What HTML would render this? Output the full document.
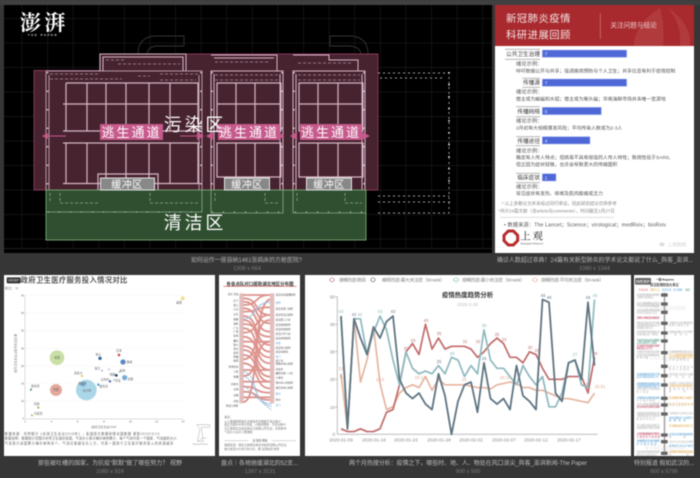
<!DOCTYPE html>
<html><head><meta charset="utf-8">
<style>
html,body{margin:0;padding:0;width:700px;height:478px;overflow:hidden;background:#363636}
svg{display:block;filter:blur(.45px);font-family:"Liberation Sans","Noto Sans CJK SC",sans-serif}
.ln{fill:none;stroke-linejoin:round;vector-effect:non-scaling-stroke}
</style></head><body>
<svg width="700" height="478" viewBox="0 0 700 478" xmlns="http://www.w3.org/2000/svg">
<defs>
<pattern id="g" patternUnits="userSpaceOnUse" x="21.7" y="18.3" width="25.6" height="24.5"><path d="M0 0V24.5M0 0H25.6" stroke="#262626" stroke-width=".9" fill="none"/></pattern>
<clipPath id="c1"><rect x="4" y="5" width="488" height="248"/></clipPath>
<clipPath id="cc"><rect x="305" y="275" width="326" height="181"/></clipPath>
</defs>
<rect width="700" height="478" fill="#363636"/>
<rect width="700" height="5" fill="#404040"/>

<!-- Card 1 -->
<g clip-path="url(#c1)">
<rect x="4" y="5" width="488" height="248" fill="#000"/>
<rect x="4" y="5" width="488" height="243" fill="url(#g)"/>
<path d="M4 248.5H492" stroke="#2a2a2a" stroke-width=".8"/>
<path d="M138 54C138 42 145 36 156 36H184V46H158Q148 46 147 54M330 36H352Q368 38 368 54M330 36V46H350Q360 47 361 54" fill="none" stroke="#333" stroke-width=".9"/>
<path d="M34 70.5H100V54H378V190H34Z" fill="#47222f" stroke="#8a3a5c" stroke-width=".9"/>
<g fill="none" stroke="#d6b8c6" stroke-width="1.200">
 <path d="M46 71H202V190M46 71V190M49 75V190M199 75V190" stroke-width="1" stroke="#b598a6"/>
 <path d="M100 71V54H186V71M103 71V57H183V71" stroke-width="1"/>
 <path d="M66 83H198V131H63M63 104H198M66 83V131M87 83V131M106 83V131M126 83V131M149 83V131M170 83V131M198 83V131"/>
 <path d="M63 143H200M66 143V183M87 143V183M106 143V183M126 143V183M149 143V183M170 143V183M198 143V183M63 183.500H200"/>
 <path d="M98 190V174H158V190"/>
 <path d="M211 55H277V71H211V190M214 58H274M211 71H283V190M214 74V190M280 74V190" stroke-width="1"/>
 <path d="M217 83H281V131H217ZM217 104H281M236 83V131M255 83V131M217 143H281V177H217ZM236 143V177M255 143V177"/>
 <path d="M293 55H329V60H358V71H293V190M296 74V190M293 71H365V190M362 74V190" stroke-width="1"/>
 <path d="M299 83H363V131H299ZM299 104H363M318 83V131M338 83V131M299 143H363V177H299ZM318 143V177M338 143V177"/>
</g>
<g fill="none" stroke="#a8939e" stroke-width=".8" stroke-dasharray="3 2">
 <path d="M50 74H98M50 79H122M138 76H150M160 74H200M160 80H196M215 75H280M215 80H278M298 75H360M298 80H360M106 60H125M118 64H180M215 62H270M298 63H352"/>
</g>
<g stroke="#d6c8cf" stroke-width="1.600" stroke-dasharray="1.500 17" fill="none"><path d="M47.500 72V190M201 72V190M212 72V190M282 72V190M294 72V190M364 72V190"/></g>
<g stroke="#d9d9d9" stroke-width=".7" stroke-dasharray="2 3" fill="none"><path d="M378 73H449V213H378M380 78H445M378 196H449M378 202H450"/></g>
<g stroke="#eee" stroke-width="1.500" stroke-dasharray="1.500 10.500" fill="none"><path d="M449 72V190"/></g>
<rect x="46" y="190" width="320" height="50" fill="#2f4f30" stroke="#76a978" stroke-width=".9"/>
<g fill="none" stroke="#8aaa8c" stroke-width=".8"><path d="M46 212H202V190M211 190V213H283V190M293 190V213H366"/><path d="M50 193V203M60 193V203H100M150 193V203H200M215 193V203M265 193V203H280M297 193V203M345 193V203H362" stroke-dasharray="3 2"/></g>
<g stroke="#c7d4c7" stroke-width="1" stroke-dasharray="1 10" fill="none"><path d="M48 212H200M212 212H282M295 212H365"/></g>
<g fill="#888" stroke="#e6e6e6" stroke-width="1"><rect x="100.500" y="178" width="54" height="12"/><rect x="224.500" y="178" width="45" height="12"/><rect x="306.500" y="178" width="45" height="12"/></g>
<g fill="#fff" font-size="10" text-anchor="middle"><text x="127" y="188" letter-spacing=".5">缓冲区</text><text x="247" y="188" letter-spacing=".5">缓冲区</text><text x="329" y="188" letter-spacing=".5">缓冲区</text></g>
<g fill="#c65a8c"><rect x="100" y="124" width="63" height="16"/><rect x="218" y="124" width="62" height="16"/><rect x="300" y="124" width="62" height="16"/>
<path d="M42 136L48 133V135.500H66V136.500H48V139ZM204 136L197 132V135.500H180V136.500H197V140ZM206 136L213 132V140ZM284 136L279 132V140ZM290 136L297 132V140ZM370 136L362 132V140Z"/></g>
<g fill="#fff" font-size="13" text-anchor="middle"><text x="131.500" y="137" letter-spacing="2">逃生通道</text><text x="249" y="137" letter-spacing="2">逃生通道</text><text x="331" y="137" letter-spacing="2">逃生通道</text></g>
<g fill="#fff" font-size="18" text-anchor="middle"><text x="195" y="131" letter-spacing="2.800">污染区</text><text x="195" y="229" letter-spacing="2.800">清洁区</text></g>
<text x="20" y="30" fill="#fff" font-size="21" font-weight="700" style="font-family:'Noto Serif CJK SC',serif" letter-spacing="3.500">澎湃</text>
<text x="43" y="36" fill="#ddd" font-size="3" font-weight="700" text-anchor="middle" letter-spacing="1.500">THE PAPER</text>
</g>
<text x="191" y="262" fill="#b0b0b0" font-size="6" textLength="111">如何运作一座容纳1461张病床的方舱医院?</text>
<text x="247" y="270" fill="#7d7d7d" font-size="5.600" text-anchor="middle">1308 x 664</text>

<!-- Card 2 -->
<rect x="495" y="5" width="199" height="248" fill="#fff"/>
<rect x="495" y="5" width="199" height="41" fill="#a92a2e"/>
<path d="M634 46Q634 24 660 8Q665 26 663 46ZM668 8Q682 24 680 46H690Q692 24 668 8Z" fill="#b13a3d"/>
<g transform="translate(490,0) scale(.33333)" font-size="16" fill="#555">
<text x="48" y="66" font-size="31" fill="#f2e3e3" letter-spacing="1.500">新冠肺炎疫情</text>
<text x="48" y="115" font-size="31" fill="#f2e3e3" letter-spacing="1.500">科研进展回顾</text>
<rect x="330" y="40" width="2" height="76" fill="#c98083"/>
<text x="361" y="83" font-size="20" fill="#e8c9c9">关注问题与结论</text>
<g fill="#4f68d8" stroke="#a8b5ec" stroke-width="1.500"><rect x="157" y="150" width="253" height="22"/><rect x="157" y="237" width="253" height="22"/><rect x="157" y="322" width="177" height="22"/><rect x="157" y="410" width="143" height="22"/><rect x="157" y="521" width="41" height="22"/></g>
<g fill="#dfe4fa" font-size="15"><text x="164" y="167">7</text><text x="164" y="254">7</text><text x="164" y="339">5</text><text x="164" y="427">4</text><text x="164" y="538">1</text></g>
<g stroke="#aaa" stroke-width="2.500"><path d="M45 148H150M45 178H150M97 235H150M97 262H150M78 320H150M78 350H150M78 410H150M78 437H150M78 520H150M78 548H150"/></g>
<g fill="#333" font-size="17" text-anchor="end"><text x="150" y="168">公共卫生治理</text><text x="150" y="254">传播源</text><text x="150" y="341">传播网络</text><text x="150" y="429">传播途径</text><text x="150" y="538">临床症状</text></g>
<text x="78" y="197">绪论示例：</text><text x="78" y="217" font-size="14.500">呼吁数据公开与共享；强调疾病预防与个人卫生；共享信息有利于疫情控制</text>
<text x="78" y="280">绪论示例：</text><text x="78" y="302" font-size="14.500">宿主或为蝙蝠和水貂；宿主或为菊头蝠；华南海鲜市场并未唯一宣源地</text>
<text x="78" y="367">绪论示例：</text><text x="78" y="388" font-size="14.500">2月初有大规模爆发风险；平均传染人数或为2-3人</text>
<text x="78" y="457">绪论示例：</text><text x="78" y="477" font-size="14.500">确定有人传人特点；但病毒不具有很强的人传人特性；致病性低于SARS,</text><text x="78" y="498" font-size="14.500">但正因为症状轻微，也许会导致更大的传播面积</text>
<text x="78" y="565">绪论示例：</text><text x="78" y="585" font-size="14.500">常见症状有发热、咳嗽及肌肉酸痛或乏力</text>
<text x="35" y="615" font-size="13.500" fill="#888">* 以上多数论文并未经过同行审议，因此研究结论仅供参考</text>
<text x="25" y="637" font-size="13.500" fill="#888">*共计24篇文献（含article与comments），时间截至1月27日</text>
<path d="M30 652H372" stroke="#ccc" stroke-width="2"/>
<text x="42" y="679" font-size="15.500" textLength="486">•  数据来源：The Lancet；Science；virological；medRxiv；bioRxiv</text>
<path d="M55 693H70L83 706V722L70 735H55L42 722V706Z" fill="none" stroke="#b82d2d" stroke-width="9"/>
<text x="91" y="718" font-size="31" fill="#222" style="font-family:'Noto Serif CJK SC',serif" letter-spacing="6">上观</text>
<text x="91" y="733" font-size="8" fill="#666">Shanghai Observer</text>
<ellipse cx="516" cy="733" rx="8" ry="6" fill="#ddd"/><text x="533" y="738" font-size="14" fill="#d2d2d2">上观数据</text>
</g>
<text x="497" y="262" fill="#b5b5b5" font-size="6" textLength="196">确诊人数超过非典！24篇有关新型肺炎的学术论文都说了什么_舆客_澎湃...</text>
<text x="594.500" y="270" fill="#7d7d7d" font-size="5.600" text-anchor="middle">1080 x 1344</text>

<!-- Card a scatter -->
<rect x="4" y="275" width="211" height="181" fill="#fff"/>
<g transform="translate(0,270) scale(.33333)">
<g stroke="#f2f2f2" stroke-width="1.500"><path d="M75 76H550M75 129H550M75 182H550M75 235H550M75 288H550M75 340H550M75 393H550"/></g>
<path d="M75 76V447H550" fill="none" stroke="#bbb" stroke-width="1.500"/>
<g font-size="8" fill="#666" text-anchor="end"><text x="72" y="79">40</text><text x="72" y="132">35</text><text x="72" y="185">30</text><text x="72" y="238">25</text><text x="72" y="291">20</text><text x="72" y="343">15</text><text x="72" y="396">10</text><text x="72" y="448">5</text></g>
<g font-size="8" fill="#666" text-anchor="middle"><text x="75" y="458">2</text><text x="154" y="458">4</text><text x="233" y="458">6</text><text x="312" y="458">8</text><text x="391" y="458">10</text><text x="470" y="458">12</text><text x="549" y="458">14</text></g>
<text x="312" y="474" font-size="9" fill="#777" text-anchor="middle">政府卫生支出/GDP</text>
<text transform="translate(50,250) rotate(-90)" font-size="9" fill="#777" text-anchor="middle">政府卫生支出占政府支出比重</text>
<text x="62" y="38" font-size="22" font-weight="700" fill="#555" textLength="320">政府卫生医疗服务投入情况对比</text>
<text x="14" y="59" font-size="10.500" fill="#888">单位：%</text>
<rect x="20" y="22" width="42" height="18" rx="3" fill="#333"/><text x="41" y="35" font-size="11" fill="#ddd" text-anchor="middle">WEBP</text>
<circle cx="171" cy="263" r="22" fill="#c9dfa6"/>
<circle cx="168" cy="360" r="18" fill="#e3a99d"/>
<circle cx="259" cy="360" r="31" fill="#abd6e8"/>
<circle cx="249" cy="342" r="8" fill="#7fb3d8"/>
<circle cx="548" cy="85" r="6" fill="#f5dc8e"/>
<circle cx="300" cy="265" r="5" fill="#2f62a8"/><circle cx="357" cy="255" r="4" fill="#c9544f"/><circle cx="369" cy="276" r="8" fill="#5a88c4"/>
<circle cx="374" cy="323" r="8" fill="#7aaedb"/><circle cx="349" cy="316" r="4" fill="#1e3c7a"/><circle cx="358" cy="306" r="3" fill="#a7dbe0"/>
<circle cx="306" cy="302" r="3" fill="#a9b4e6"/><circle cx="327" cy="298" r="3.500" fill="#d3d0f2"/><circle cx="330" cy="334" r="3.500" fill="#4b62b4"/>
<circle cx="342" cy="330" r="3" fill="#9ed6cc"/><circle cx="295" cy="344" r="3.500" fill="#3f8fcf"/><circle cx="246" cy="318" r="3" fill="#e8b53c"/>
<circle cx="93" cy="359" r="3" fill="#3f8a4a"/><circle cx="115" cy="413" r="3" fill="#7eaa3e"/><circle cx="96" cy="436" r="3" fill="#a6c24a"/>
<g font-size="8.500" fill="#666" text-anchor="middle"><text x="171" y="265">英国</text><text x="168" y="362">德国</text><text x="261" y="364">意大利</text><text x="247" y="344">西班牙</text><text x="537" y="101">美国</text><text x="295" y="257">瑞士</text><text x="357" y="244">日本</text><text x="388" y="279">挪威</text><text x="391" y="330">法国</text><text x="337" y="316">瑞典</text><text x="367" y="304">奥地</text><text x="292" y="299">荷兰</text><text x="315" y="332">比利时</text><text x="354" y="334">丹麦</text><text x="311" y="353">葡萄牙</text><text x="235" y="312">加拿大</text><text x="106" y="351">斯洛伐</text><text x="110" y="405">巴西</text><text x="115" y="433">印度尼</text></g>
<g font-size="9.800" fill="#666"><text x="14" y="495" textLength="464">数据来源：世界银行《全球卫生支出2016年》；各国官方数据和联合国数据 更新2020/3/13</text><text x="14" y="509" textLength="516">数据说明：数据统计范围为世界卫生组织各国，气泡大小表示确诊病例累计，每个气泡代表一个国家，气泡面积大小</text><text x="14" y="524" textLength="506">气泡表示该国累计确诊病例多少，气泡位置越靠右上方，代表一国用于卫生医疗服务投入的资源越多</text></g>
<g fill="none" stroke="#aaa" stroke-width="1.500"><path d="M590 464H630L628 472H604L610 514H592L600 478ZM596 514Q605 500 620 504"/></g>
<text x="601" y="525" font-size="8" fill="#999" text-anchor="middle">DoctorsTime</text>
</g>
<text x="38" y="465" fill="#bbb" font-size="6" textLength="144">那些被吐槽的国家，为抗疫“默默”做了哪些努力？ 视野</text>
<text x="110" y="473" fill="#7d7d7d" font-size="5.600" text-anchor="middle">1080 x 924</text>

<!-- Card b sankey -->
<rect x="219" y="275" width="81" height="181" fill="#fff"/>
<g transform="translate(210,270) scale(.33333)">
<text x="150" y="46" font-size="13.500" font-weight="700" fill="#333" text-anchor="middle">各省点队对口援助湖北地区分布图</text>
<path d="M40 49H260" stroke="#c9534b" stroke-width="2"/>
<g fill="none" stroke="#d06a62" stroke-width="5.500" opacity=".72">
<path d="M100 75H180M100 85C150 85 130 135 180 135M100 95C150 95 130 160 180 160M100 105C150 105 130 75 180 75M100 115C150 115 130 185 180 185"/>
<path d="M100 125C150 125 130 112 180 112M100 138C150 138 130 225 180 225M100 150C150 150 130 245 180 245M100 162C150 162 130 200 180 200"/>
<path d="M100 175C150 175 125 262 180 262M100 188C150 188 130 135 180 135M100 200C150 200 130 280 180 280M100 215H180M100 228C150 228 130 300 180 300"/>
<path d="M100 240C150 240 130 320 180 320M100 255C150 255 130 335 180 335M100 268C150 268 130 150 180 150M100 280C150 280 130 355 180 355"/>
<path d="M100 300H180M100 318C150 318 130 215 180 215M100 335H180M100 350C150 350 130 368 180 368M100 365C150 365 130 390 180 390"/>
<path d="M100 382H180M100 396C150 396 125 100 180 88"/>
</g>
<g fill="none" stroke="#9cc2e0" stroke-width="5" opacity=".7">
<path d="M100 146C140 146 130 97 180 97"/>
</g>
<g fill="none" stroke="#8cb8dc" stroke-width="2.200" opacity=".9">
<path d="M100 305C150 315 120 400 185 402M100 318C140 330 130 395 185 410M100 345C140 380 150 395 185 420"/>
</g>
<g fill="#c98a86"><rect x="88" y="70" width="13" height="330" opacity=".55"/><rect x="180" y="70" width="13" height="330" opacity=".55"/></g>
<g font-size="7.500" fill="#444" text-anchor="end"><text x="85" y="75">北京 河北</text><text x="85" y="94">辽宁</text><text x="85" y="108">浙江</text><text x="85" y="120">江苏</text><text x="85" y="135">山东</text><text x="85" y="150">福建</text><text x="85" y="163">湖南</text><text x="85" y="177">广东</text><text x="85" y="188">广西</text><text x="85" y="200">海南</text><text x="85" y="214">重庆</text><text x="85" y="226">四川</text><text x="85" y="238">贵州</text><text x="85" y="250">云南</text><text x="85" y="262">西藏</text><text x="85" y="274">陕西</text><text x="85" y="293">甘肃青海</text><text x="85" y="307">宁夏</text><text x="85" y="322">新疆</text><text x="85" y="345">内蒙古</text><text x="85" y="360">吉林</text><text x="85" y="378">安徽</text><text x="85" y="396">河南</text><text x="85" y="410">黑龙江地区</text></g>
<g font-size="7.500" fill="#444"><text x="197" y="77">武汉市金银潭医院</text><text x="197" y="100" fill="#5c9bd1">黄冈</text><text x="197" y="118">武汉市第三医院</text><text x="197" y="137">武汉市汉口医院</text><text x="197" y="152">武汉第二人民</text><text x="197" y="166">武汉协和医院</text><text x="197" y="180">武汉同济医院</text><text x="197" y="193">武汉大学人民</text><text x="197" y="207">武汉中南医院</text><text x="197" y="222" fill="#5c9bd1">孝感</text><text x="197" y="236">武汉中心医院</text><text x="197" y="247">武汉市肺科</text><text x="197" y="262" fill="#5c9bd1">荆门</text><text x="197" y="274">咸宁市</text><text x="197" y="283">恩施州中心医院</text><text x="197" y="300">宜昌市</text><text x="197" y="312">襄阳市第一人民</text><text x="197" y="325">十堰市</text><text x="197" y="340">鄂州市人民医院</text><text x="197" y="356">黄石市中心医院</text><text x="197" y="374" fill="#5c9bd1">随州</text><text x="197" y="392">荆州</text><text x="197" y="408" fill="#5c9bd1">天门</text></g>
<g font-size="8.500" fill="#777"><text x="43" y="444">备注：</text><text x="43" y="457">以上数据根据湖北日报等官方数据不完全统计</text><text x="43" y="467">截止日期2020年2月底，以相关报告、不完全统计</text><text x="43" y="478">对口援助信息来自各省卫健委公开信息，仅供参考</text><text x="43" y="489">气泡大小表示人数规模</text></g>
<path d="M43 512H115M185 512H258" stroke="#999" stroke-width="1.200"/>
<text x="150" y="514" font-size="8" fill="#555" text-anchor="middle">总 策划 撰稿</text>
<g font-size="8.500" fill="#777"><text x="43" y="528">数据来源：国家卫健委及各省市政府官网公开信息</text><text x="43" y="540">统计截至2020年2月20日，图 澎湃新闻 制作</text></g>
</g>
<text x="221" y="465" fill="#bbb" font-size="6" textLength="77">盘点｜各地驰援湖北的52支...</text>
<text x="260" y="473" fill="#7d7d7d" font-size="5.600" text-anchor="middle">1397 x 3131</text>

<!-- Card c line chart -->
<rect x="305" y="275" width="326" height="181" fill="#fff"/>
<g clip-path="url(#cc)">
<g font-size="4.800" fill="#888">
<path d="M329 280H335M341 280H347M370 280H376M382 280H388M453 280H459M465 280H471M532 280H538M544 280H550" stroke="#aaa" stroke-width=".7"/>
<circle cx="332" cy="279.800" r="2" fill="#fff" stroke="#c47a7a" stroke-width=".7"/><circle cx="373" cy="279.800" r="2" fill="#fff" stroke="#5f7482" stroke-width=".7"/><circle cx="456" cy="279.800" r="2" fill="#fff" stroke="#8fb8bd" stroke-width=".7"/><circle cx="535" cy="279.800" r="2" fill="#fff" stroke="#e5b8a5" stroke-width=".7"/>
<text x="339" y="281.700" textLength="27">疫情热度-数目</text><text x="382" y="281.700" textLength="63">疫情热度-最大关注度（50-rank）</text><text x="462" y="281.700" textLength="63">疫情热度-最小关注度（50-rank）</text><text x="541" y="281.700" textLength="63">疫情热度-平均关注度（50-rank）</text>
</g>
<text x="442" y="297" font-size="6.400" font-weight="700" fill="#333">疫情热度趋势分析</text>
<text x="457" y="306" font-size="4.600" fill="#bbb">2020-2-26</text>
<path d="M337.300 296.700V434.300H597.700" fill="none" stroke="#c4c4c4" stroke-width="1.100"/>
<path d="M335.500 296.700H337.300M335.500 324.300H337.300M335.500 351.700H337.300M335.500 379.300H337.300M335.500 407H337.300" stroke="#999" stroke-width=".7"/>
<g font-size="4.600" fill="#888" text-anchor="end"><text x="335" y="298.500">50</text><text x="335" y="326">40</text><text x="335" y="353.500">30</text><text x="335" y="381">20</text><text x="335" y="408.800">10</text><text x="335" y="436">0</text></g>
<g font-size="4.600" fill="#888" text-anchor="middle"><text x="341" y="441.500">2020-01-09</text><text x="374" y="441.500">2020-01-18</text><text x="406" y="441.500">2020-01-23</text><text x="439" y="441.500">2020-01-28</text><text x="471" y="441.500">2020-02-02</text><text x="504" y="441.500">2020-02-07</text><text x="536" y="441.500">2020-02-12</text><text x="569" y="441.500">2020-02-17</text></g>
<g transform="matrix(6.500 0 0 -2.750 341 434.300)">
<polyline class="ln" stroke="#e6b5a0" stroke-width="1.700" points="0,22 1,2 2,42 3,19 4,27 5,39 6,18.500 7,9 8,10 9,15 10,17 11,18 12,17 13,21 14,16 15,20 16,18 17,18 18,18 19,18 20,17.500 21,17 22,17 23,16.500 24,18 25,18.500 26,19 27,18.500 28,17 29,17 30,16 31,16 32,15 33,14 34,13 35,13 36,12.500 37,12 38,11.500 39,15"/>
<polyline class="ln" stroke="#c26c6c" stroke-width="1.700" points="0,2 1,1 2,1 3,2 4,1 5,1 6,2 7,8 8,9 9,18 10,30 11,33 12,29 13,40 14,31 15,35 16,31 17,32 18,32 19,32 20,31 21,28 22,30 23,33 24,35 25,33 26,28 27,28 28,26 29,30 30,29 31,24 32,20 33,20 34,20 35,21 36,21 37,21 38,15 39,28"/>
<polyline class="ln" stroke="#8fb9be" stroke-width="1.700" points="0,43 1,2 2,42 3,42 4,29 5,37 6,43 7,38 8,27 9,18 10,30 11,24 12,22 13,23 14,22 15,25 16,22 17,28 18,27 19,21 20,25 21,22 22,38 23,27 24,24 25,24 26,21 27,18 28,25 29,21 30,18 31,21 32,10 33,10 34,15 35,26 36,27 37,18 38,17 39,49"/>
<polyline class="ln" stroke="#5f7482" stroke-width="1.800" points="0,43 1,2 2,42 3,35 4,29 5,39 6,35 7,41 8,43 9,20 10,15 11,13 12,15 13,11 14,9 15,22 16,14 17,0 18,12 19,18 20,19 21,8 22,26 23,13 24,11 25,13 26,9 27,25 28,14 29,12 30,9 31,49 32,48 33,15 34,12 35,26 36,27 37,20 38,48 39,25"/>
</g>
<g font-size="4.300" text-anchor="middle" fill="#c47a7a"><text x="341" y="378">2</text><text x="426" y="322">40</text><text x="413" y="342">33</text><text x="439" y="335">35</text><text x="406" y="350">30</text><text x="465" y="343">32</text><text x="478" y="343">32</text><text x="497" y="336">35</text><text x="504" y="341">33</text><text x="530" y="349">30</text><text x="537" y="352">29</text><text x="588" y="386">15</text><text x="595" y="355">28</text></g>
<g font-size="4.300" text-anchor="middle" fill="#8fb8bd"><text x="341" y="313">43</text><text x="360" y="316">42</text><text x="380" y="313">43</text><text x="484" y="327">38</text><text x="452" y="355">28</text><text x="575" y="356">27</text><text x="595" y="297">49</text></g>
<g font-size="4.300" text-anchor="middle" fill="#6a7d8a"><text x="354" y="316">42</text><text x="393" y="313">43</text><text x="543" y="297">49</text><text x="549" y="299">48</text><text x="588" y="299">48</text><text x="484" y="360">26</text><text x="439" y="363">25</text></g>
<g font-size="4.300" text-anchor="middle" fill="#e0a892"><text x="341" y="370">22</text><text x="380" y="381">18.5</text><text x="464" y="381">18</text><text x="600" y="388">15.51</text><text x="420" y="379">18.12</text><text x="505" y="379">19.18</text></g>
</g>
<text x="349" y="465" fill="#bbb" font-size="6" textLength="238">两个月热搜分析：疫情之下，哪些时、地、人、物处在风口浪尖_舆客_澎湃新闻-The Paper</text>
<text x="468" y="473" fill="#7d7d7d" font-size="5.600" text-anchor="middle">900 x 500</text>

<!-- Card d timeline -->
<rect x="634" y="275" width="60" height="181" fill="#fff"/>
<g transform="translate(625,270) scale(.33333)">
<rect x="30" y="24" width="48" height="20" rx="3" fill="#666"/><text x="54" y="39" font-size="14" font-weight="700" fill="#ddd" text-anchor="middle">WEBP</text>
<text x="120" y="32" font-size="8" font-weight="700" fill="#333" text-anchor="middle">一图 Magazine</text>
<text x="118" y="48" font-size="9.500" font-weight="700" fill="#444" text-anchor="middle">武汉疫情防控大事记</text>
<g font-size="7" fill="#999" text-anchor="middle"><text x="55" y="62" fill="#d66">红色信息</text><text x="90" y="62" fill="#e0a33e">重要节点</text><text x="125" y="62" fill="#4d9bd5">蓝色信息</text><text x="158" y="62" fill="#4d9bd5">官方通报</text><text x="188" y="62" fill="#3d8c7a">绿色</text></g>
<text x="120" y="120" font-size="24" fill="#eee" font-family="Liberation Serif,serif" text-anchor="middle" font-weight="700">VIMagazine</text>
<text x="120" y="270" font-size="24" fill="#eee" font-family="Liberation Serif,serif" text-anchor="middle" font-weight="700">VIMagazine</text>
<text x="120" y="410" font-size="24" fill="#eee" font-family="Liberation Serif,serif" text-anchor="middle" font-weight="700">VIMagazine</text>
<text x="120" y="540" font-size="24" fill="#eee" font-family="Liberation Serif,serif" text-anchor="middle" font-weight="700">VIMagazine</text>
<rect x="116" y="68" width="5" height="488" fill="#aaa"/>
<g fill="#666"><rect x="108" y="70" width="20" height="10" rx="1"/><rect x="108" y="97" width="20" height="10" rx="1"/><rect x="108" y="122" width="20" height="10" rx="1"/><rect x="108" y="155" width="20" height="10" rx="1"/><rect x="108" y="184" width="20" height="10" rx="1"/><rect x="108" y="208" width="20" height="10" rx="1"/><rect x="108" y="243" width="20" height="10" rx="1"/><rect x="108" y="284" width="20" height="10" rx="1"/><rect x="108" y="312" width="20" height="10" rx="1"/><rect x="108" y="340" width="20" height="10" rx="1"/><rect x="108" y="380" width="20" height="10" rx="1"/><rect x="108" y="400" width="20" height="10" rx="1"/><rect x="108" y="427" width="20" height="10" rx="1"/><rect x="108" y="490" width="20" height="10" rx="1"/><rect x="108" y="510" width="20" height="10" rx="1"/><rect x="108" y="545" width="20" height="10" rx="1"/></g>
<g font-size="7" fill="#b0b0b0" text-anchor="start">
<text x="35" y="76" textLength="70">武汉发现不明原因肺炎病例报告</text><text x="35" y="84" textLength="50">卫健委专家组抵达</text>
<text x="35" y="102" textLength="70">武汉市卫健委通报肺炎疫情情况</text><text x="35" y="110" textLength="68">华南海鲜市场休市整治通知</text>
<text x="35" y="123" textLength="70">初步判定病原体为新型冠状病毒</text><text x="35" y="131" textLength="62">检测试剂盒发往武汉</text>
<text x="35" y="146" textLength="70" fill="#c04a64">首例死亡病例报告相关通报发布</text>
<text x="35" y="160" textLength="70">钟南山院士确认存在人传人现象</text><text x="35" y="168" textLength="70">国务院联防联控机制启动工作</text><text x="35" y="176" textLength="50">全国报告病例上升</text>
<text x="35" y="187" textLength="70">武汉宣布暂时关闭离汉通道公告</text><text x="35" y="195" textLength="65">全国各省启动一级响应</text>
<text x="35" y="213" textLength="70" fill="#3d8c7a">军队医疗队抵达武汉支援医院</text><text x="35" y="221" textLength="60" fill="#3d8c7a">火神山医院开工建设</text>
<text x="35" y="229" textLength="70" fill="#c04a64">世卫组织宣布构成国际关注事件</text><text x="35" y="237" textLength="48" fill="#c04a64">重要突发公共卫生</text>
<text x="35" y="248" textLength="70">方舱医院开始收治轻症患者</text><text x="35" y="256" textLength="68">各地医疗队陆续驰援湖北</text><text x="35" y="264" textLength="35">数据更新</text>
<text x="35" y="315" textLength="70" fill="#4d9bd5">全国新增确诊病例首次下降</text><text x="35" y="323" textLength="66" fill="#4d9bd5">武汉开展全面排查工作</text>
<text x="35" y="343" textLength="70" fill="#4d9bd5">湖北调整诊断标准新增临床诊断</text><text x="35" y="351" textLength="70" fill="#4d9bd5">中央指导组赴湖北开展工作</text><text x="35" y="359" textLength="70">雷神山医院交付使用收治</text><text x="35" y="367" textLength="35">病人增加</text>
<text x="35" y="385" textLength="70" fill="#4d9bd5">方舱医院床位继续增加通知</text><text x="35" y="393" textLength="55">全市集中隔离</text>
<text x="35" y="405" textLength="70">武汉市小区实行封闭管理规定</text><text x="35" y="413" textLength="70" fill="#c04a64">部分病例出院治愈情况通报</text>
<text x="35" y="432" textLength="70">全国除湖北外新增确诊连续下降</text><text x="35" y="440" textLength="70">专家组报告发布关于疫情分析</text><text x="35" y="448" textLength="55">数据更新情况</text>
<text x="35" y="468" textLength="70">世卫组织专家组考察武汉</text><text x="35" y="476" textLength="70">湖北新增病例下降至历史新低</text>
<text x="35" y="494" textLength="70" fill="#c04a64">武汉新增确诊数量持续下降情况</text><text x="35" y="502" textLength="70" fill="#c04a64">方舱医院开始休舱</text>
<text x="35" y="515" textLength="70" fill="#4d9bd5">全国援鄂医疗队开始分批撤离</text><text x="35" y="523" textLength="60" fill="#4d9bd5">武汉逐步恢复</text>
<text x="35" y="548" textLength="70">湖北全省新增确诊病例清零</text><text x="35" y="556" textLength="60">解除离汉通道管控</text>
<text x="132" y="160" textLength="72">中国疾控中心派出专家组赴武汉</text><text x="132" y="168" textLength="60">国家卫健委公告</text>
<text x="132" y="187" textLength="72">湖北省启动重大公共卫生事件</text><text x="132" y="195" textLength="55">一级响应</text>
<text x="132" y="248" textLength="72">各地捐赠物资陆续抵达武汉</text><text x="132" y="256" textLength="72" fill="#e0a33e">红十字会物资分配情况通报</text><text x="132" y="264" textLength="72" fill="#e0a33e">全市开展拉网式排查</text><text x="132" y="272" textLength="60">工作安排情况</text>
<text x="132" y="292" textLength="72">武汉市新增床位</text><text x="132" y="300" textLength="60">医护人员到岗</text>
<text x="132" y="315" textLength="72">湖北省委主要负责人调整</text><text x="132" y="323" textLength="65">中央决定</text>
<text x="132" y="342" textLength="72">全国累计治愈病例增加</text><text x="132" y="350" textLength="72" fill="#e0a33e">疫情防控形势出现积极变化</text><text x="132" y="358" textLength="72">数据持续向好</text><text x="132" y="366" textLength="50">更新</text>
<text x="132" y="386" textLength="72" fill="#e0a33e">武汉核酸检测能力大幅提升</text>
<text x="132" y="405" textLength="72" fill="#e0a33e">全市小区封闭管理</text>
<text x="132" y="432" textLength="72">方舱医院扩容至两万余床</text><text x="132" y="445" textLength="72" fill="#4d9bd5">全国支援医护人员超四万</text><text x="132" y="453" textLength="50" fill="#4d9bd5">数据更新</text>
<text x="132" y="470" textLength="72" fill="#e0a33e">世卫组织高度评价防控工作</text>
<text x="132" y="495" textLength="72" fill="#4d9bd5">武汉首次实现新增病例清零</text><text x="132" y="503" textLength="50">通报</text>
<text x="132" y="517" textLength="72">习近平总书记赴武汉考察</text><text x="132" y="530" textLength="72" fill="#4d9bd5">援鄂医疗队有序撤离</text>
<text x="132" y="548" textLength="72" fill="#e0a33e">湖北解除离鄂通道管控措施</text><text x="132" y="556" textLength="60">恢复</text>
</g>
</g>
<text x="634" y="465" fill="#bbb" font-size="6" textLength="60">特别报道 假如武汉的...</text>
<text x="664" y="473" fill="#7d7d7d" font-size="5.600" text-anchor="middle">900 x 5796</text>
</svg>
</body></html>
